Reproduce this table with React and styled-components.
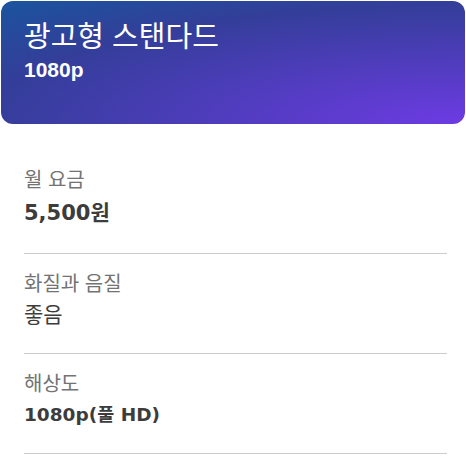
import React from "react";
import styled, { createGlobalStyle } from "styled-components";

const Global = createGlobalStyle`
  html, body { margin: 0; padding: 0; background: #fff; }
  body { font-family: "Liberation Sans", "Noto Sans CJK KR", sans-serif; }
`;

const Card = styled.div`
  width: 466px;
  padding: 1px 1px 0 1px;
  box-sizing: border-box;
`;

const Header = styled.div`
  border-radius: 12px;
  padding: 18px 22px 0 23px;
  height: 123px;
  box-sizing: border-box;
  color: #fff;
  background: radial-gradient(140.76% 131.96% at 100% 100%, rgb(109, 59, 227) 0%, rgba(74, 42, 150, 0.5) 73.57%, rgba(74, 42, 150, 0) 100%), rgb(29, 82, 157);
`;

const Title = styled.div`
  font-size: 29px;
  line-height: 36px;
  font-weight: 400;
`;

const Sub = styled.div`
  margin-top: 2px;
  font-size: 21px;
  line-height: 26px;
  font-weight: 700;
`;

const List = styled.div`
  margin: 0 18px 0 23px;
  padding-top: 9px;
`;

const Row = styled.div`
  padding: ${(p) => (p.$first ? "34px 0 25px" : "17px 0 24px")};
  border-bottom: 1px solid #cccccc;
`;

const Label = styled.div`
  font-size: 20px;
  line-height: 26px;
  color: #737373;
`;

const Value = styled.div`
  margin-top: ${(p) => (p.$big ? "6px" : "4px")};
  font-family: "DejaVu Sans", "Noto Sans CJK KR", sans-serif;
  font-size: ${(p) => p.$size};
  line-height: ${(p) => (p.$big ? "29px" : "28px")};
  font-weight: ${(p) => (p.$light ? 400 : 700)};
  color: #3c3c3c;
`;

const rows = [
  { label: "월 요금", value: "5,500원", big: true, size: "21px" },
  { label: "화질과 음질", value: "좋음", light: true, size: "21px" },
  { label: "해상도", value: "1080p(풀 HD)", size: "18.5px" },
];

export default function App() {
  return (
    <>
      <Global />
      <Card>
        <Header>
          <Title>광고형 스탠다드</Title>
          <Sub>1080p</Sub>
        </Header>
        <List>
          {rows.map((r, i) => (
            <Row key={r.label} $first={i === 0}>
              <Label>{r.label}</Label>
              <Value $big={r.big} $light={r.light} $size={r.size}>{r.value}</Value>
            </Row>
          ))}
        </List>
      </Card>
    </>
  );
}
